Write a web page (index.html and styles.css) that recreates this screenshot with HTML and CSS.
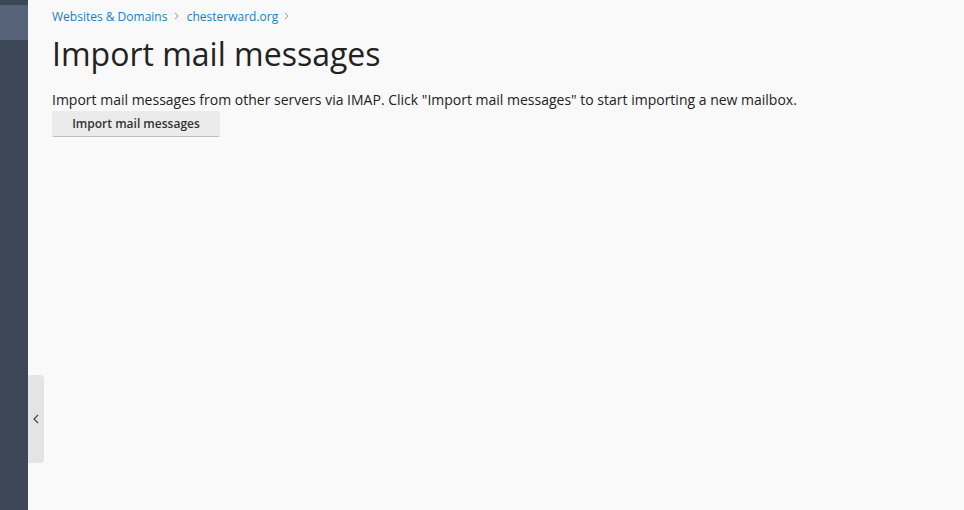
FILE: index.html
```html
<!DOCTYPE html>
<html lang="en">
<head>
  <meta charset="UTF-8">
  <title>Import mail messages</title>
  <link rel="stylesheet" href="styles.css">
</head>
<body>

<div class="layout">
  <aside class="sidebar">
    <div class="sidebar-active"></div>
  </aside>

  <main class="content">
    <nav class="breadcrumbs">
      <a href="#">Websites &amp; Domains</a>
      <svg class="sep" width="5" height="8" viewBox="0 0 5 8"><path d="M1 1 L4 4 L1 7" fill="none" stroke="#999" stroke-width="1"/></svg>
      <a href="#">chesterward.org</a>
      <svg class="sep" width="5" height="8" viewBox="0 0 5 8"><path d="M1 1 L4 4 L1 7" fill="none" stroke="#999" stroke-width="1"/></svg>
    </nav>

    <h1>Import mail messages</h1>

    <p class="hint">Import mail messages from other servers via IMAP. Click "Import mail messages" to start importing a new mailbox.</p>
    <button class="btn">Import mail messages</button>
  </main>

  <button class="collapse" title="Collapse">
    <svg width="6" height="10" viewBox="0 0 6 10"><path d="M5 1 L1 5 L5 9" fill="none" stroke="#444" stroke-width="1.2"/></svg>
  </button>
</div>

</body>
</html>
```

FILE: styles.css
```css
html, body {
  margin: 0;
  height: 100%;
}
body {
  font-family: "Open Sans", Arial, sans-serif;
  background: #f9f9f9;
  color: #222;
}
.layout {
  display: flex;
  height: 100%;
  position: relative;
}
.sidebar {
  width: 28px;
  flex-shrink: 0;
  background: #3b4657;
  padding-top: 5px;
  box-sizing: border-box;
}
.sidebar-active {
  height: 35px;
  background: #566378;
}
.content {
  padding: 8px 24px 0 24px;
  flex: 1;
}
.breadcrumbs {
  font-size: 12px;
  line-height: 18px;
}
.breadcrumbs a {
  color: #1b7ebf;
  text-decoration: none;
}
.breadcrumbs .sep {
  margin: 0 5px 0 3px;
  vertical-align: 1px;
}
h1 {
  font-size: 32px;
  font-weight: 400;
  margin: 8px 0 17px;
  line-height: 40px;
}
.hint {
  font-size: 14px;
  margin: 0;
  line-height: 18px;
}
.btn {
  margin-top: 2px;
  font-family: "Open Sans", Arial, sans-serif;
  font-size: 12px;
  font-weight: 600;
  color: #333;
  background: #ebebeb;
  border: none;
  border-bottom: 1px solid #bdbdbd;
  border-radius: 2px;
  padding: 0 20px;
  height: 26px;
  width: 168px;
}
.collapse {
  position: absolute;
  left: 28px;
  top: 375px;
  width: 16px;
  height: 88px;
  padding: 0;
  border: none;
  background: #e4e4e4;
  border-radius: 0 4px 4px 0;
  display: flex;
  align-items: center;
  justify-content: center;
}
```
